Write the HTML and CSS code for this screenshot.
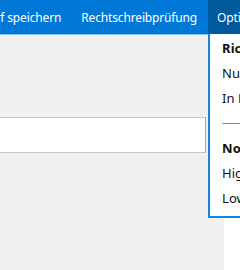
FILE: index.html
```html
<!DOCTYPE html>
<html>
<head>
  <meta charset="utf-8">
  <title>Editor</title>
  <link rel="stylesheet" href="styles.css">
</head>
<body>
  <div class="window">
    <div class="menubar">
      <div class="menu-item">Entwurf speichern</div>
      <div class="menu-item">Rechtschreibprüfung</div>
      <div class="menu-item open">Optionen
        <div class="dropdown">
          <div class="dropdown-item heading">Richtung</div>
          <div class="dropdown-item">Nur Text</div>
          <div class="dropdown-item">In HTML</div>
          <div class="dropdown-sep"></div>
          <div class="dropdown-item heading">Normal</div>
          <div class="dropdown-item">High</div>
          <div class="dropdown-item">Low</div>
        </div>
      </div>
    </div>

    <div class="content">
      <input type="text" class="field">
    </div>
  </div>
</body>
</html>
```

FILE: styles.css
```css
body {
  margin: 0;
  width: 240px;
  height: 270px;
  overflow: hidden;
  background: white;
  font-family: "Noto Sans", sans-serif;
  font-size: 12px;
}

.window {
  margin-left: -48px;
}

.menubar {
  display: flex;
  height: 34px;
  background: #0078d7;
  border-bottom: 1px solid #8fc3ec;
  color: white;
  white-space: nowrap;
  letter-spacing: -0.15px;
}

.menu-item {
  position: relative;
  display: flex;
  align-items: center;
  padding: 0 11px 0 9px;
}

.menu-item.open {
  background: #005a9e;
}

.dropdown {
  position: absolute;
  top: 34px;
  left: 0;
  width: 160px;
  padding: 2px 0 5px 0;
  background: white;
  border-left: 2px solid #1a84dc;
  border-bottom: 2px solid #1a84dc;
  color: #111;
  font-size: 13px;
  letter-spacing: 0;
  z-index: 10;
}

.dropdown-item {
  height: 25px;
  line-height: 25px;
  padding-left: 12px;
}

.dropdown-item.heading {
  font-weight: bold;
}

.dropdown-sep {
  height: 25px;
  margin-left: 12px;
  background: linear-gradient(#8a8a8a, #8a8a8a) no-repeat 0 12px / 100% 1px;
}

.content {
  width: 272px;
  height: 235px;
  padding-top: 82px;
  box-sizing: border-box;
  background: #f0f0f0;
}

.field {
  display: block;
  box-sizing: border-box;
  width: 254px;
  height: 36px;
  margin: 0;
  border: 1px solid #c4c4c4;
  border-right-color: #a8a8a8;
  background: white;
}
```
